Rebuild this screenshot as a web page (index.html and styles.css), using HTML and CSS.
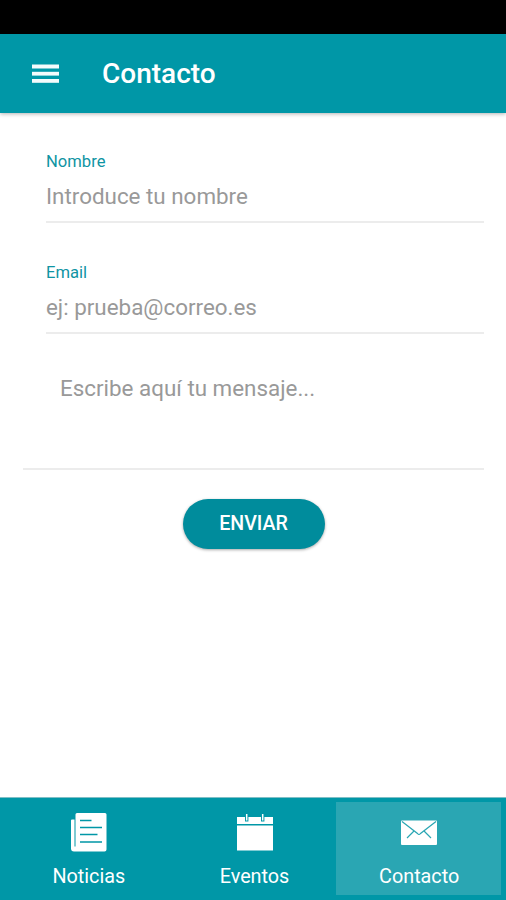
FILE: index.html
```html
<!DOCTYPE html>
<html lang="es">

<head>
    <meta charset="UTF-8">
    <title>Contacto</title>
    <link rel="stylesheet" href="styles.css">
</head>

<body>
    <div class="status-bar"></div>

    <header class="toolbar">
        <button class="menu-button" type="button" aria-label="Menú">
            <svg width="27" height="19" viewBox="0 0 27 19" fill="#f4fbfc">
                <rect y="0.500" width="27" height="4" />
                <rect y="7.800" width="27" height="3.800" />
                <rect y="15" width="27" height="3.800" />
            </svg>
        </button>
        <h1>Contacto</h1>
    </header>

    <main>
        <form id="contactForm">
            <div class="field">
                <label for="nombre">Nombre</label>
                <input type="text" id="nombre" name="nombre" placeholder="Introduce tu nombre">
            </div>
            <div class="field">
                <label for="email">Email</label>
                <input type="text" id="email" name="email" placeholder="ej: prueba@correo.es">
            </div>
            <div class="message">
                <textarea name="mensaje" placeholder="Escribe aquí tu mensaje..."></textarea>
            </div>
            <button class="send-button" type="submit">ENVIAR</button>
        </form>
    </main>

    <nav class="tabs">
        <a class="tab" href="#">
            <svg width="36" height="40" viewBox="0 0 36 40">
                <path d="M4.500 1.500Q4.500 0 6 0H34Q35.500 0 35.500 1.500V36.500Q35.500 38.500 33.500 38.500H3Q0 38.500 0 35.500V7.500Q0 6.500 1 6.500H3.500V33.500H4.500Z" fill="#fff" />
                <path d="M9 7.500H20.500M9 14.500H31M9 21.500H26.500M9 29H31" stroke="#0097a7" stroke-width="1.500" />
            </svg>
            <span>Noticias</span>
        </a>
        <a class="tab" href="#">
            <svg width="36" height="40" viewBox="0 0 36 40">
                <path d="M0 4H36V11H0Z" fill="#fff" />
                <path d="M0 12.500H36V37.500H0Z" fill="#fff" />
                <path d="M9.700 3V8.500M25.700 3V8.500" stroke="#0097a7" stroke-width="3.400" />
                <path d="M9.700 1V7.500M25.700 1V7.500" stroke="#fff" stroke-width="1.500" />
            </svg>
            <span>Eventos</span>
        </a>
        <a class="tab active" href="#">
            <svg width="36" height="40" viewBox="0 0 36 40">
                <rect y="7.500" width="36" height="24.500" rx="1" fill="#fff" />
                <path d="M1 8.500L16.500 20.500Q18 22.500 19.500 20.500L35 8.500M13 18L6 25M23 18L30 25" fill="none" stroke="#2aa6b3" stroke-width="1.200" />
            </svg>
            <span>Contacto</span>
        </a>
    </nav>
</body>

</html>
```
FILE: styles.css
```css
* {
    box-sizing: border-box;
}

body {
    font-family: Roboto, sans-serif;
    background-color: #fff;
    margin: 0;
    display: flex;
    flex-direction: column;
    height: 100vh;
}

.status-bar {
    height: 34px;
    background: #000;
}

.toolbar {
    height: 79px;
    padding-left: 32px;
    display: flex;
    align-items: center;
    background: #0097a7;
    color: #fff;
    box-shadow: 0 1px 4px rgba(0, 0, 0, 0.3);
}

.menu-button {
    display: flex;
    padding: 0;
    border: none;
    background: none;
}

h1 {
    margin: 0 0 0 43px;
    font-size: 28px;
    font-weight: 500;
}

main {
    flex: 1;
}

.field {
    height: 111px;
    margin: 0 22px 0 46px;
    padding-top: 39px;
}

label {
    display: block;
    font-size: 16.6px;
    line-height: 20px;
    color: #0f94a3;
}

input,
textarea {
    display: block;
    width: 100%;
    padding: 0;
    border: none;
    outline: none;
    background: none;
    font-family: inherit;
    font-size: 22.4px;
    line-height: 30px;
}

input {
    height: 51px;
    padding-bottom: 1px;
    border-bottom: 2px solid #ececec;
}

input::placeholder,
textarea::placeholder {
    color: #999;
    opacity: 1;
}

.message {
    height: 135px;
    margin: 0 22px 0 23px;
    padding: 38px 0 0 37px;
    border-bottom: 2px solid #ececec;
}

textarea {
    height: 80px;
    resize: none;
}

.send-button {
    display: block;
    width: 142px;
    height: 50px;
    margin: 29px auto 0 182.5px;
    padding: 0 0 1px;
    border: none;
    border-radius: 25px;
    background: #008c9c;
    color: #fff;
    font-family: inherit;
    font-size: 19.6px;
    font-weight: 500;
    box-shadow: 0 1px 3px rgba(0, 0, 0, 0.35);
}

.tabs {
    display: flex;
    height: 103px;
    padding: 4px 5px 5px;
    border-top: 1px solid #80bfc6;
    background: #0097a7;
}

.tab {
    flex: 1;
    padding: 11px 0 0 1px;
    text-align: center;
    text-decoration: none;
    color: #fff;
    font-size: 19.8px;
    line-height: 24px;
}

.tab:not(.active) {
    padding-left: 2px;
}

.tab svg {
    display: block;
    margin: 0 auto 12px;
}

.tab.active {
    background: #2aa6b3;
}
```
